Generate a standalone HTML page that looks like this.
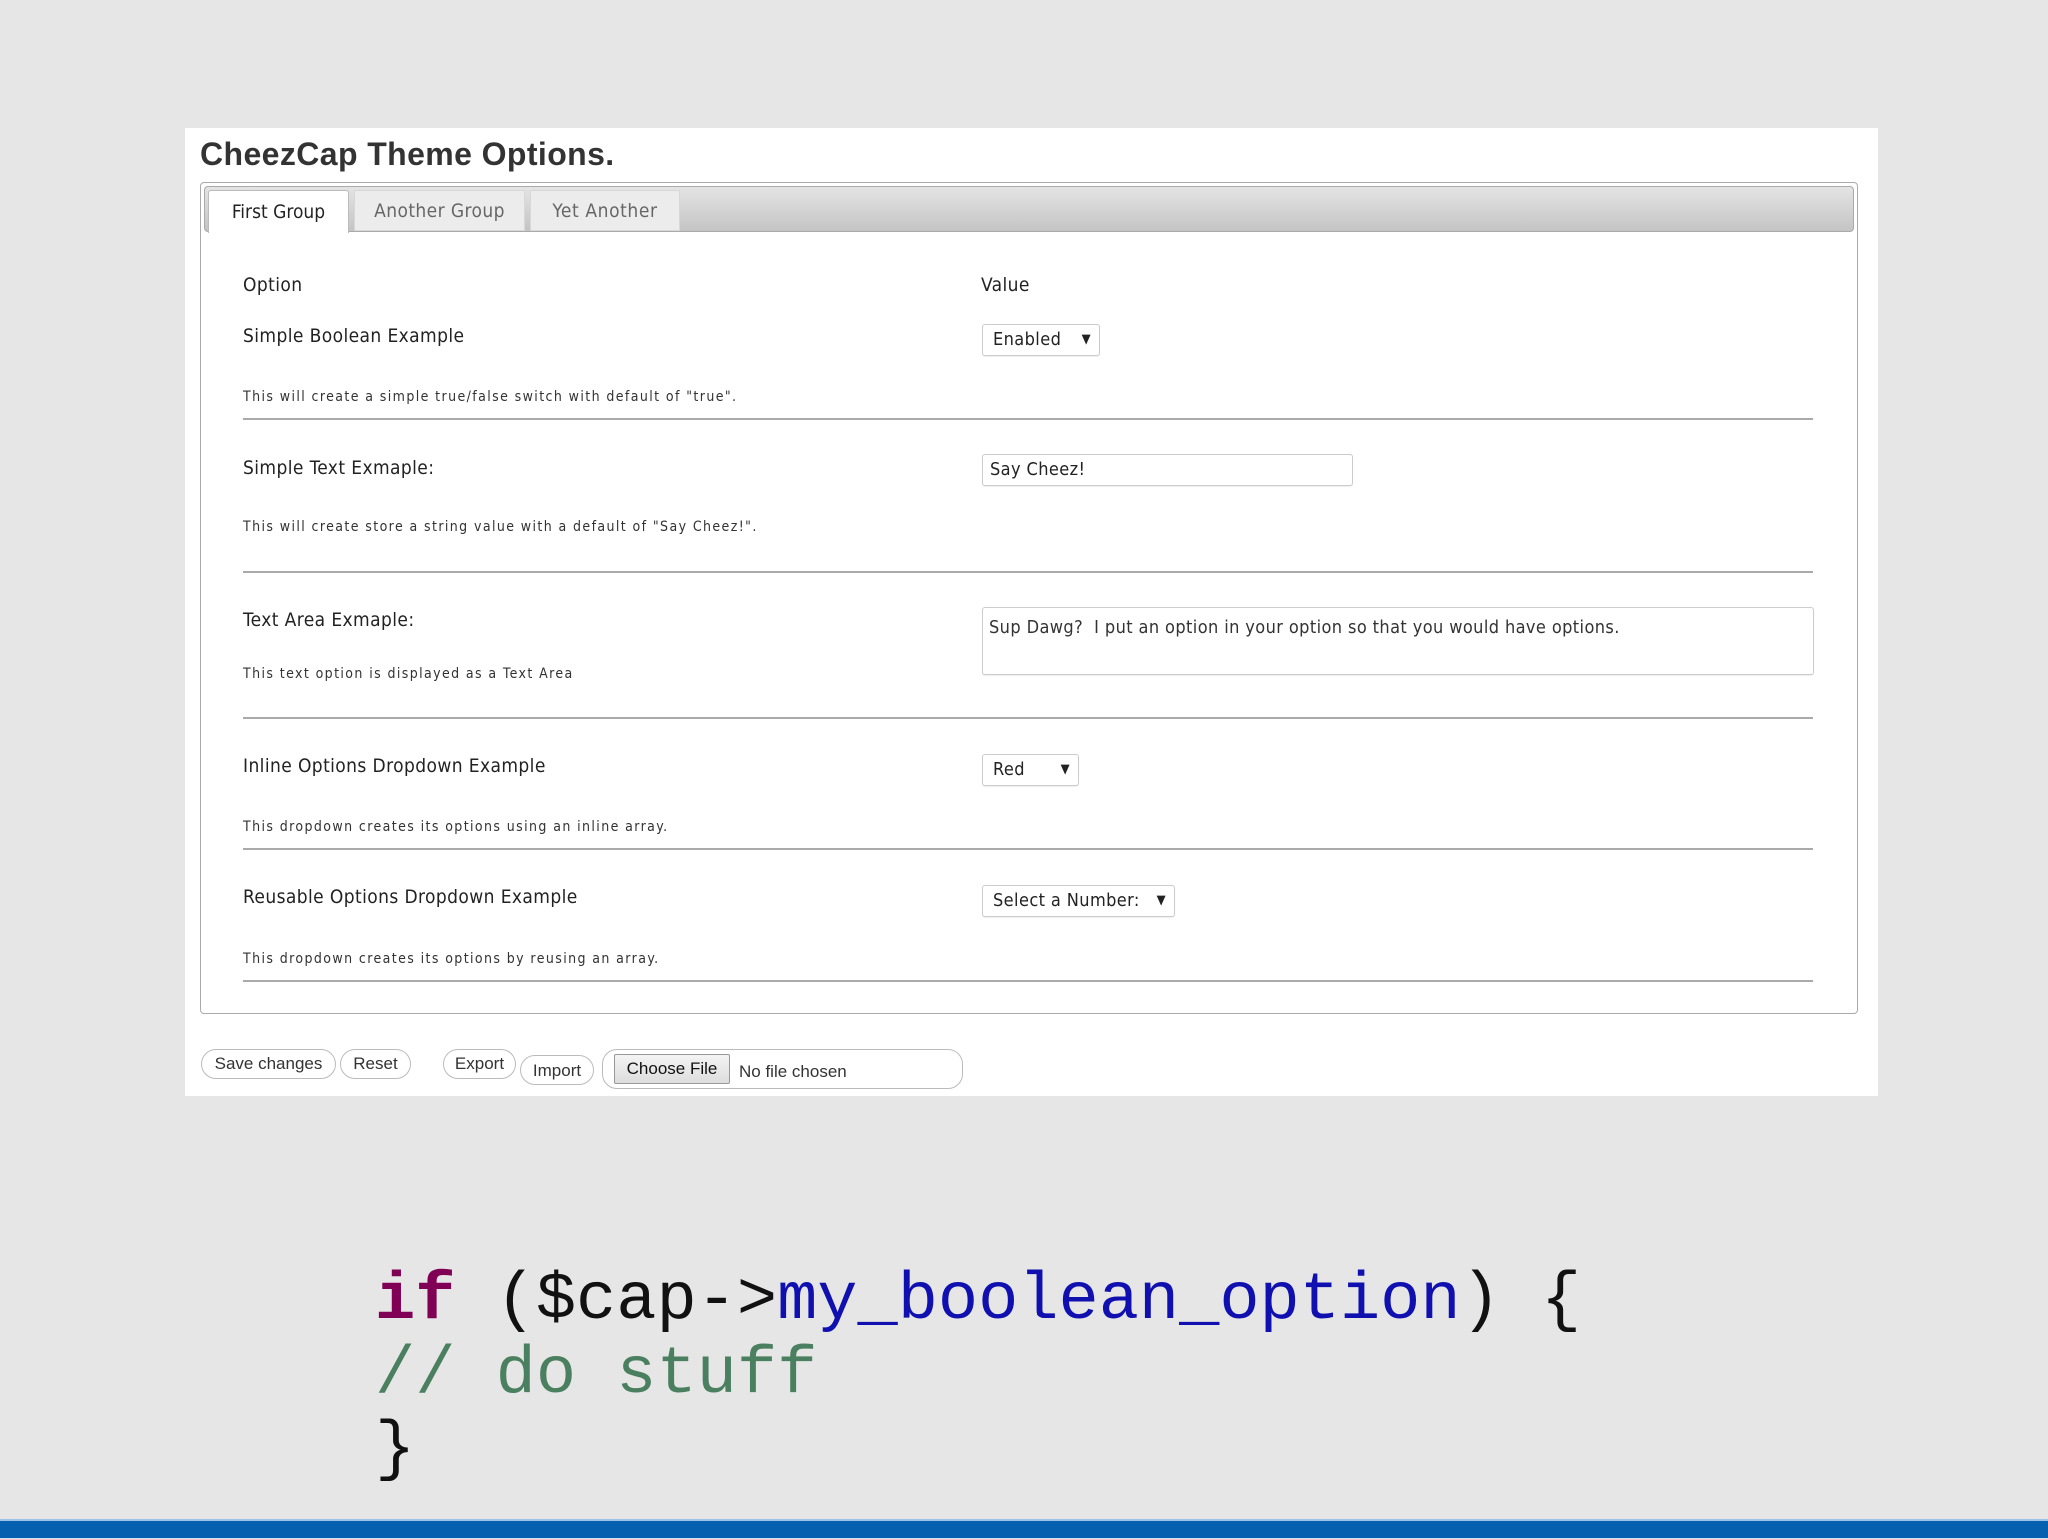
<!DOCTYPE html>
<html><head><meta charset="utf-8"><style>
*{margin:0;padding:0;box-sizing:border-box}
body{width:2048px;height:1539px;background:#e6e6e6;position:relative;overflow:hidden;font-family:"DejaVu Sans Condensed","DejaVu Sans","Liberation Sans",sans-serif;color:#222}
.a{position:absolute;white-space:nowrap}
.lbl{font-size:19px;color:#222;letter-spacing:0.4px}
.desc{font-size:14px;color:#333;letter-spacing:1.4px}
.hr{position:absolute;left:243px;width:1570px;height:2px;background:#aaa}
.sel{position:absolute;border:1px solid #ccc;border-radius:3px;background:#fff;font-size:18px;padding-left:10px;line-height:30px;box-shadow:0 1px 1px #eee;letter-spacing:0.4px}
.sel b{position:absolute;right:8px;top:0;font-size:13px}
.btn{position:absolute;border:1px solid #bbb;border-radius:15px;background:#fff;font-family:"Liberation Sans",sans-serif;font-size:17px;color:#333;text-align:center;line-height:28px}
.code{position:absolute;left:375px;font-family:"Liberation Mono",monospace;font-size:67px;white-space:pre;color:#111}
</style></head><body>
<div class="a" style="left:185px;top:128px;width:1693px;height:968px;background:#fff"></div>
<div class="a" style="left:200px;top:136px;font-family:'Liberation Sans',sans-serif;font-weight:bold;font-size:32px;letter-spacing:0.4px;color:#333">CheezCap Theme Options.</div>
<div class="a" style="left:200px;top:182px;width:1658px;height:832px;border:1px solid #aaa;border-radius:4px;background:#fff"></div>
<div class="a" style="left:204px;top:186px;width:1650px;height:46px;border:1px solid #aaa;border-radius:4px;background:linear-gradient(#e4e4e4,#c4c4c4)"></div>
<div class="a" style="left:208px;top:190px;width:141px;height:43px;background:#fff;border:1px solid #bbb;border-bottom:none;border-radius:3px 3px 0 0;font-size:19px;line-height:42px;text-align:center;color:#222">First Group</div>
<div class="a" style="left:354px;top:190px;width:171px;height:41px;background:#ececec;border:1px solid #d8d8d8;font-size:19px;line-height:40px;text-align:center;color:#666;letter-spacing:0.4px">Another Group</div>
<div class="a" style="left:530px;top:190px;width:150px;height:41px;background:#ececec;border:1px solid #d8d8d8;font-size:19px;line-height:40px;text-align:center;color:#666;letter-spacing:0.6px">Yet Another</div>

<div class="a lbl" style="left:243px;top:274px">Option</div>
<div class="a lbl" style="left:981px;top:274px">Value</div>

<div class="a lbl" style="left:243px;top:325px">Simple Boolean Example</div>
<div class="sel" style="left:982px;top:324px;width:118px;height:32px">Enabled<b>▼</b></div>
<div class="a desc" style="left:243px;top:389px">This will create a simple true/false switch with default of "true".</div>
<div class="hr" style="top:418px"></div>

<div class="a lbl" style="left:243px;top:457px">Simple Text Exmaple:</div>
<div class="sel" style="left:982px;top:454px;width:371px;height:32px;padding-left:7px">Say Cheez!</div>
<div class="a desc" style="left:243px;top:519px">This will create store a string value with a default of "Say Cheez!".</div>
<div class="hr" style="top:571px"></div>

<div class="a lbl" style="left:243px;top:609px">Text Area Exmaple:</div>
<div class="sel" style="left:982px;top:607px;width:832px;height:68px;padding-left:6px;line-height:40px;font-size:18px;color:#333">Sup Dawg?&nbsp; I put an option in your option so that you would have options.</div>
<div class="a desc" style="left:243px;top:666px">This text option is displayed as a Text Area</div>
<div class="hr" style="top:717px"></div>

<div class="a lbl" style="left:243px;top:755px">Inline Options Dropdown Example</div>
<div class="sel" style="left:982px;top:754px;width:97px;height:32px">Red<b>▼</b></div>
<div class="a desc" style="left:243px;top:819px">This dropdown creates its options using an inline array.</div>
<div class="hr" style="top:848px"></div>

<div class="a lbl" style="left:243px;top:886px">Reusable Options Dropdown Example</div>
<div class="sel" style="left:982px;top:885px;width:193px;height:32px">Select a Number:<b>▼</b></div>
<div class="a desc" style="left:243px;top:951px">This dropdown creates its options by reusing an array.</div>
<div class="hr" style="top:980px"></div>

<div class="btn" style="left:201px;top:1049px;width:135px;height:30px">Save changes</div>
<div class="btn" style="left:340px;top:1049px;width:71px;height:30px">Reset</div>
<div class="btn" style="left:443px;top:1049px;width:73px;height:30px">Export</div>
<div class="btn" style="left:520px;top:1055px;width:74px;height:30px;line-height:30px">Import</div>
<div class="btn" style="left:602px;top:1049px;width:361px;height:40px;text-align:left;padding-left:136px;line-height:44px">No file chosen</div>
<div class="a" style="left:614px;top:1054px;width:116px;height:30px;border:1px solid #999;border-radius:2px;background:linear-gradient(#f4f4f4,#ddd);font-family:'Liberation Sans',sans-serif;font-size:17px;line-height:28px;text-align:center;color:#111">Choose File</div>

<div class="code" style="top:1263px"><span style="color:#7f0055;font-weight:bold">if</span> ($cap-&gt;<span style="color:#1010b0">my_boolean_option</span>) {</div>
<div class="code" style="top:1337px;color:#4a7f5f">// do stuff</div>
<div class="code" style="top:1412px">}</div>

<div class="a" style="left:0;top:1519px;width:2048px;height:2px;background:#9cc3e6"></div>
<div class="a" style="left:0;top:1521px;width:2048px;height:17px;background:#0561b0"></div>
<div class="a" style="left:0;top:1538px;width:2048px;height:1px;background:#cfe2f3"></div>
</body></html>
